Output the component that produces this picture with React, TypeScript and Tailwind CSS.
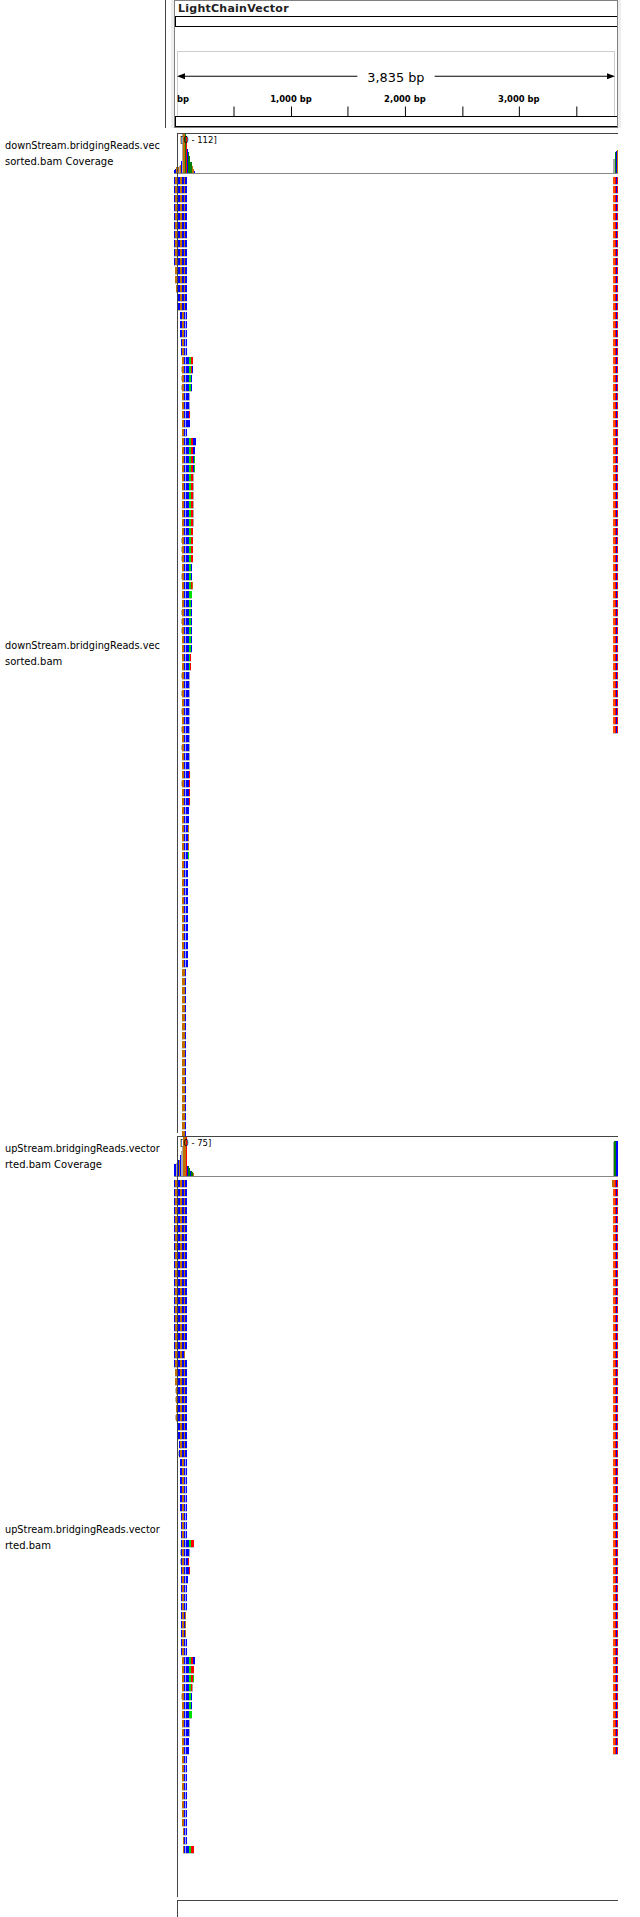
const COLORS: Record<string, string> = {
  B: "#0000ff",
  O: "#c07000",
  R: "#ff0000",
  G: "#00e000",
  D: "#008000",
  W: "#9a9aff",
  S: "#a8a8a8",
  T: "#ff5000",
};

// pileup stripes by page x, one letter per pixel
const EARLY: Record<number, string> = { 174: "B", 175: "O", 176: "O", 177: "O", 178: "B", 179: "B", 180: "O", 181: "O", 182: "B", 183: "B", 184: "O", 185: "B", 186: "B" };
const LATE: Record<number, string> = { 180: "B", 181: "B", 182: "O", 183: "O", 184: "B", 185: "W", 186: "B", 187: "B", 188: "B", 189: "G", 190: "G", 191: "R", 192: "R", 193: "B", 194: "B", 195: "B" };
const THIN: Record<number, string> = { 182: "O", 183: "O", 184: "O", 185: "B" };

type Row = { y: number; from: number; to: number; last?: string; ghost?: boolean; stripes?: Record<number, string> };

const span = (a: number, b: number, from: number, to: number, last?: string, stripes?: Record<number, string>): Row[] => {
  const out: Row[] = [];
  for (let y = a; y <= b; y += 9) out.push({ y, from, to, last, stripes });
  return out;
};

const withGhost = (rows: Row[], ys: number[]) => rows.map((r) => (ys.includes(r.y) ? { ...r, ghost: true } : r));

const DOWN_READS: Row[] = withGhost(
  [
    ...span(177, 258, 174, 187),
    ...span(267, 276, 175, 187),
    ...span(285, 285, 176, 187),
    ...span(294, 303, 178, 187),
    ...span(312, 330, 180, 187, undefined, LATE),
    ...span(339, 348, 181, 187, undefined, LATE),
    ...span(357, 357, 182, 193, "R"),
    ...span(366, 366, 182, 193, "B"),
    ...span(375, 384, 182, 192, "B"),
    ...span(393, 402, 182, 190, "S"),
    ...span(411, 411, 182, 190, "R"),
    ...span(420, 420, 182, 190, "B"),
    ...span(429, 429, 182, 187),
    ...span(438, 438, 182, 196, "B"),
    ...span(447, 447, 182, 195, "B"),
    ...span(456, 465, 182, 195, "G"),
    ...span(474, 519, 182, 194, "S"),
    ...span(528, 555, 182, 193, "R"),
    ...span(564, 573, 182, 192, "B"),
    ...span(582, 582, 182, 193, "O"),
    ...span(591, 591, 182, 192, "G"),
    ...span(600, 645, 182, 192, "B"),
    ...span(654, 663, 182, 191, "R"),
    ...span(672, 762, 182, 190, "S"),
    ...span(771, 798, 182, 190, "R"),
    ...span(807, 816, 182, 189, "B"),
    ...span(825, 843, 182, 189, "O"),
    ...span(852, 852, 182, 189, "G"),
    ...span(861, 960, 182, 188, "B"),
    ...span(969, 1131, 182, 186, undefined, THIN),
  ].map((r) => (r.from >= 180 && !r.stripes ? { ...r, stripes: LATE } : r)),
  [366, 375, 384, 537, 546, 555, 573, 609, 618, 627, 672, 690, 708, 726, 744, 780],
);

const UP_READS: Row[] = withGhost(
  [
    ...span(1180, 1342, 174, 187),
    ...span(1351, 1351, 174, 185, "O"),
    ...span(1360, 1360, 174, 187),
    ...span(1369, 1378, 175, 187),
    ...span(1387, 1414, 176, 187),
    ...span(1423, 1432, 178, 187),
    ...span(1441, 1450, 179, 187),
    ...span(1459, 1504, 180, 187, undefined, LATE),
    ...span(1513, 1531, 181, 187, undefined, LATE),
    ...span(1540, 1540, 181, 194, "R"),
    ...span(1549, 1549, 181, 190, "S"),
    ...span(1558, 1558, 181, 189, "R"),
    ...span(1567, 1567, 181, 190, "R"),
    ...span(1576, 1576, 181, 188, "B"),
    ...span(1585, 1603, 181, 187),
    ...span(1612, 1630, 181, 186, "O"),
    ...span(1639, 1648, 181, 187),
    ...span(1657, 1657, 182, 195, "B"),
    ...span(1666, 1666, 182, 194, "R"),
    ...span(1675, 1675, 182, 194, "G"),
    ...span(1684, 1684, 182, 193, "S"),
    ...span(1693, 1702, 182, 192, "B"),
    ...span(1711, 1711, 182, 192, "G"),
    ...span(1720, 1729, 182, 190, "S"),
    ...span(1738, 1747, 182, 189, "B"),
    ...span(1756, 1819, 182, 187),
    ...span(1828, 1837, 183, 187),
    ...span(1846, 1846, 183, 194, "R"),
  ].map((r) => (r.from >= 180 && !r.stripes ? { ...r, stripes: LATE } : r)),
  [1387, 1396, 1414, 1450, 1549, 1558, 1693],
);

const DOWN_BARS: [number, number, string][] = [
  [174, 170, "B"], [175, 169, "B"], [176, 167, "O"], [177, 167, "B"], [178, 167, "O"], [179, 166, "S"], [180, 165, "O"], [181, 161, "B"],
  [182, 133, "S"], [183, 133, "O"], [184, 133, "O"], [185, 133, "D"], [186, 136, "R"], [187, 149, "B"], [188, 152, "D"], [189, 156, "D"],
  [190, 162, "D"], [191, 162, "D"], [192, 166, "O"], [193, 169, "O"], [194, 171, "B"],
  [613, 159, "S"], [614, 159, "S"], [615, 152, "D"], [616, 151, "B"], [617, 150, "O"],
];

const UP_BARS: [number, number, string][] = [
  [174, 1164, "B"], [175, 1164, "B"], [176, 1163, "S"], [177, 1162, "O"], [178, 1160, "B"], [179, 1160, "O"], [180, 1155, "B"], [181, 1151, "S"],
  [182, 1146, "S"], [183, 1137, "O"], [184, 1137, "O"], [185, 1137, "O"], [186, 1137, "R"], [187, 1166, "B"], [188, 1166, "D"], [189, 1168, "D"],
  [190, 1171, "B"], [191, 1171, "D"], [192, 1172, "D"], [193, 1173, "O"],
  [613, 1142, "S"], [614, 1141, "D"], [615, 1141, "D"], [616, 1141, "B"], [617, 1141, "B"],
];

const MATE_ROW = ["T", "T", "R", "B", "R"];

function Pileup({ rows, edgeFrom, edgeTo, edgeLead }: { rows: Row[]; edgeFrom: number; edgeTo: number; edgeLead?: boolean }) {
  const edge: JSX.Element[] = [];
  for (let y = edgeFrom; y <= edgeTo; y += 9) {
    MATE_ROW.forEach((c, i) => {
      edge.push(<rect key={`${y}-${i}`} x={613 + i} y={y} width={1} height={7} fill={COLORS[c]} />);
    });
    edge.push(<rect key={`${y}-g`} x={613} y={y + 7} width={5} height={1} fill="#c4c4c4" />);
  }
  return (
    <>
      {rows.map((r) => {
        const cells: JSX.Element[] = [];
        for (let x = r.from; x < r.to; x++) {
          const stripes = r.stripes ?? EARLY;
          const key = x === r.to - 1 && r.last ? r.last : stripes[x] ?? "B";
          cells.push(<rect key={x} x={x} y={r.y} width={1} height={7} fill={COLORS[key]} />);
        }
        return (
          <g key={r.y}>
            {r.ghost && <rect x={r.from - 1} y={r.y + 1} width={1} height={5} fill="#b8b8b8" />}
            {cells}
            <rect x={r.from} y={r.y + 7} width={r.to - r.from} height={1} fill="#c4c4c4" />
          </g>
        );
      })}
      {edge}
      {edgeLead && <rect x={612} y={edgeFrom} width={2} height={7} fill={COLORS.O} />}
    </>
  );
}

function Track({ top, height, range, bars, base, rule, rows, edgeFrom, edgeTo, edgeLead, lineEnd }: {
  top: number;
  height: number;
  range: string;
  bars: [number, number, string][];
  base: number;
  rule: number;
  rows: Row[];
  edgeFrom: number;
  edgeTo: number;
  edgeLead?: boolean;
  lineEnd: number;
}) {
  return (
    <svg width={466} height={height} viewBox={`174 ${top} 466 ${height}`} className="block shrink-0">
      {bars.map(([x, y, c]) => (
        <rect key={x} x={x} y={y} width={1} height={base - y} fill={COLORS[c]} />
      ))}
      <Pileup rows={rows} edgeFrom={edgeFrom} edgeTo={edgeTo} edgeLead={edgeLead} />
      <rect x={177} y={top} width={441} height={1} fill="#444444" />
      <rect x={174} y={rule} width={444} height={1} fill="#888888" />
      <rect x={177} y={top} width={1} height={lineEnd - top} fill="#444444" />
      <text x={180} y={top + 10} fontSize={8.5} fill="#000" fontFamily="'DejaVu Sans', sans-serif">{range}</text>
    </svg>
  );
}

function Ruler() {
  const ticks = [232, 290, 347, 405, 463, 520, 578];
  const labels: [number, string][] = [[269, "1,000 bp"], [384, "2,000 bp"], [499, "3,000 bp"]];
  return (
    <svg width={442} height={66} viewBox="175 51 442 66" className="block">
      <rect x={175} y={51} width={441} height={66} fill="none" stroke="#cccccc" strokeWidth={1} transform="translate(0.5 0.5)" />
      <path d="M177 76H357M435 76H615" stroke="#000" strokeWidth={1} transform="translate(0 0.5)" />
      <path d="M175 76.5l8-3v6zM617 76.5l-8-3v6z" fill="#000" />
      <text x={367} y={82} fontSize={13} fill="#000" fontFamily="'DejaVu Sans', sans-serif">3,835 bp</text>
      <text x={175} y={102} fontSize={8.5} fontWeight={700} fill="#000" fontFamily="'DejaVu Sans', sans-serif">bp</text>
      {labels.map(([x, t]) => (
        <text key={t} x={x} y={102} fontSize={8.5} fontWeight={700} fill="#000" fontFamily="'DejaVu Sans', sans-serif">{t}</text>
      ))}
      {ticks.map((x) => (
        <rect key={x} x={x} y={107} width={1} height={10} fill="#000" />
      ))}
    </svg>
  );
}

export default function App() {
  return (
    <div className="w-[640px] h-[1917px] overflow-hidden bg-white font-['DejaVu_Sans',sans-serif] text-[10px] leading-[16px] text-black">
      {/* Reference sequence header */}
      <div className="flex h-[128px]">
        <div className="w-[166px] shrink-0 border-r border-[#444444]" />
        <div className="w-[5px] shrink-0" />
        <div className="flex w-[450px] bg-[#eeeeee] px-[3px]">
          <div className="flex w-[444px] flex-col border border-[#808080] bg-white">
            <div className="h-[15px] pl-[3px] text-[11px] leading-[15px] font-bold tracking-[0.25px] text-[#222222]">LightChainVector</div>
            <div className="h-[11px] border-y border-l border-black" />
            <div className="h-[24px]" />
            <Ruler />
            <div className="h-[11px] border-y border-l border-black" />
          </div>
        </div>
      </div>

      <div className="h-[5px]" />

      <div className="flex">
        <div className="w-[174px] shrink-0 overflow-hidden pl-[5px] pt-[5px]">
          <div className="text-[9.75px]">downStream.bridgingReads.vec</div>
          <div>sorted.bam Coverage</div>
          <div className="mt-[468px] text-[9.75px]">downStream.bridgingReads.vec</div>
          <div>sorted.bam</div>
        </div>
        <Track top={133} height={1003} range="[0 - 112]" bars={DOWN_BARS} base={173} rule={173} rows={DOWN_READS} edgeFrom={177} edgeTo={728} lineEnd={1133} />
      </div>

      <div className="flex">
        <div className="w-[174px] shrink-0 overflow-hidden pl-[5px] pt-[5px]">
          <div className="text-[9.75px]">upStream.bridgingReads.vector</div>
          <div>rted.bam Coverage</div>
          <div className="mt-[349px] text-[9.75px]">upStream.bridgingReads.vector</div>
          <div>rted.bam</div>
        </div>
        <Track top={1136} height={764} range="[0 - 75]" bars={UP_BARS} base={1176} rule={1176} rows={UP_READS} edgeFrom={1180} edgeTo={1747} edgeLead lineEnd={1897} />
      </div>

      <div className="ml-[177px] h-[17px] w-[441px] border-l border-t border-[#444444]" />
    </div>
  );
}
